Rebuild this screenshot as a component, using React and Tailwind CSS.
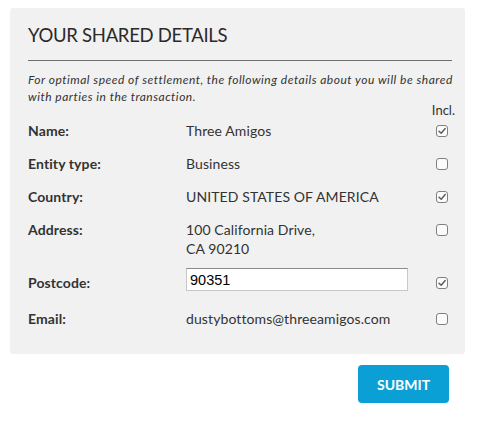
import React from "react";

function Box({ checked }) {
  return (
    <div className="w-[12px] h-[12px] rounded-[3px] border border-[#808080] bg-[#fbfbfb] flex items-center justify-center">
      {checked && (
        <svg width="10" height="10" viewBox="0 0 10 10">
          <path d="M2 5.2 L4.2 7.3 L8.2 2.6" fill="none" stroke="#5f5f5f" strokeWidth="1.5" strokeLinecap="round" strokeLinejoin="round" />
        </svg>
      )}
    </div>
  );
}

function Row({ label, children, checked, className = "" }) {
  return (
    <div className={"flex items-start " + className}>
      <div className="w-[158px] shrink-0 font-bold text-[14px] leading-[19px] text-[#333] tracking-[0.1px]">{label}</div>
      <div className="flex-1 text-[14px] leading-[19px] text-[#333] tracking-[0.1px]">{children}</div>
      <div className="w-[19px] shrink-0 pt-[4px]">
        <Box checked={checked} />
      </div>
    </div>
  );
}

export default function App() {
  return (
    <div className="w-[479px] h-[423px] bg-white" style={{ fontFamily: "Lato, 'Noto Sans', sans-serif" }}>
      <div className="ml-[10px] pt-[8px]">
        <div className="w-[455px] h-[346px] bg-[#f1f1f1] rounded-[3px] pl-[18px] pr-[10px] pt-[15px]">
          <div className="text-[18.5px] leading-[24px] font-normal text-[#2a2a2a] tracking-[-0.3px]">YOUR SHARED DETAILS</div>
          <div className="mt-[13px] mr-[3px] h-px bg-[#6f6f6f]" />
          <div className="mt-[10px] text-[12px] leading-[17px] italic text-[#333] tracking-[0.5px]">
            For optimal speed of settlement, the following details about you will be shared
            <br />
            with parties in the transaction.
          </div>
          <div className="flex justify-end text-[13px] leading-[16px] text-[#333] -mt-[3px]">Incl.</div>
          <div className="mt-[3px] flex flex-col">
            <Row label="Name:" checked>Three Amigos</Row>
            <Row label="Entity type:" className="mt-[14px]">Business</Row>
            <Row label="Country:" checked className="mt-[14px]">UNITED STATES OF AMERICA</Row>
            <Row label="Address:" className="mt-[14px]">
              <div>100 California Drive,</div>
              <div>CA 90210</div>
            </Row>
            <div className="flex items-start mt-[10px]">
              <div className="w-[158px] shrink-0 mt-[5px] font-bold text-[14px] leading-[19px] text-[#333] tracking-[0.1px]">Postcode:</div>
              <div className="flex-1">
                <div className="w-[222px] h-[23px] bg-white border border-[#c8c8c8] border-t-[#8a8a8a] pl-[3px] pt-[2px] text-[14.5px] leading-[19px] text-black" style={{ fontFamily: "'Liberation Sans', sans-serif" }}>90351</div>
              </div>
              <div className="w-[19px] shrink-0 pt-[9px]">
                <Box checked />
              </div>
            </div>
            <Row label="Email:" className="mt-[17px]">dustybottoms@threeamigos.com</Row>
          </div>
        </div>
      </div>
      <div className="w-[449px] flex justify-end pt-[11px]">
        <div className="w-[91px] h-[38px] rounded-[4px] bg-[#0a9fd5] text-white font-bold text-[14px] flex items-center justify-center">SUBMIT</div>
      </div>
    </div>
  );
}
